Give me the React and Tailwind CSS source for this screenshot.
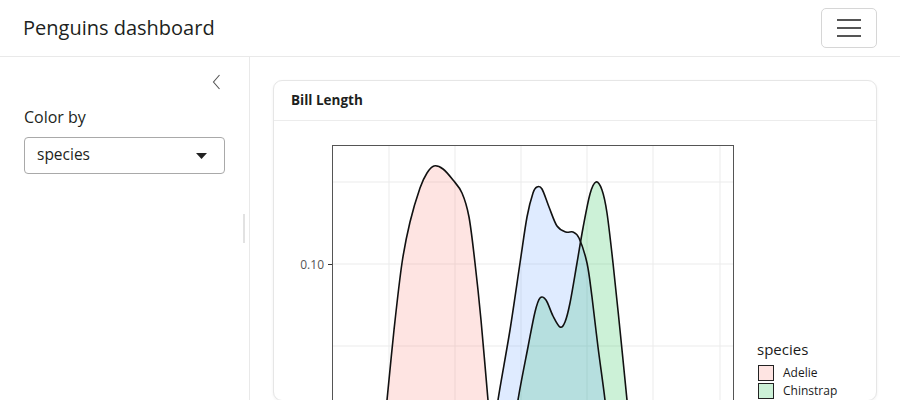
import React from "react";

function smoothPath(pts, closeY) {
  let d = `M${pts[0][0]},${closeY} L${pts[0][0]},${pts[0][1]}`;
  for (let i = 0; i < pts.length - 1; i++) {
    const p0 = pts[i - 1] || pts[i];
    const p1 = pts[i];
    const p2 = pts[i + 1];
    const p3 = pts[i + 2] || p2;
    const c1x = p1[0] + (p2[0] - p0[0]) / 6;
    const c1y = p1[1] + (p2[1] - p0[1]) / 6;
    const c2x = p2[0] - (p3[0] - p1[0]) / 6;
    const c2y = p2[1] - (p3[1] - p1[1]) / 6;
    d += ` C${c1x},${c1y} ${c2x},${c2y} ${p2[0]},${p2[1]}`;
  }
  d += ` L${pts[pts.length - 1][0]},${closeY} Z`;
  return d;
}

function linePath(pts) {
  let d = `M${pts[0][0]},${pts[0][1]}`;
  for (let i = 0; i < pts.length - 1; i++) {
    const p0 = pts[i - 1] || pts[i];
    const p1 = pts[i];
    const p2 = pts[i + 1];
    const p3 = pts[i + 2] || p2;
    const c1x = p1[0] + (p2[0] - p0[0]) / 6;
    const c1y = p1[1] + (p2[1] - p0[1]) / 6;
    const c2x = p2[0] - (p3[0] - p1[0]) / 6;
    const c2y = p2[1] - (p3[1] - p1[1]) / 6;
    d += ` C${c1x},${c1y} ${c2x},${c2y} ${p2[0]},${p2[1]}`;
  }
  return d;
}

const adelie = [
  [382, 440], [387, 400], [394, 330], [402, 263], [410, 222], [420, 188],
  [427, 173], [434, 166], [443, 169], [453, 180], [462, 193], [469, 217],
  [475, 263], [481, 320], [488, 400], [492, 440],
];
const gentoo = [
  [493, 440], [498, 400], [510, 330], [520, 263], [527, 217], [533, 193],
  [537, 187], [542, 189], [549, 207], [557, 226], [566, 232], [573, 232],
  [579, 238], [587, 263], [592, 297], [598, 347], [605, 400], [609, 440],
];
const chinstrap = [
  [513, 440], [518, 400], [528, 347], [535, 312], [540, 298], [546, 300],
  [553, 316], [560, 327], [565, 322], [570, 303], [577, 263], [583, 228],
  [590, 194], [596, 182], [602, 190], [607, 213], [613, 263], [620, 330],
  [627, 400], [631, 440],
];

function Plot() {
  const vGrid = [389, 455, 521, 587, 653, 720];
  const hGrid = [182, 264, 346];
  return (
    <svg
      width="601"
      height="279"
      viewBox="274 121 601 279"
      className="block"
      style={{ fontFamily: "'Open Sans', 'Noto Sans', sans-serif" }}
    >
      <defs>
        <clipPath id="panel">
          <rect x="333" y="146" width="400" height="300" />
        </clipPath>
      </defs>
      <g clipPath="url(#panel)">
        {vGrid.map((x) => (
          <line key={x} x1={x} y1="140" x2={x} y2="420" stroke="#ebebeb" strokeWidth="1" />
        ))}
        {hGrid.map((y) => (
          <line key={y} x1="330" y1={y} x2="740" y2={y} stroke="#ebebeb" strokeWidth="1" />
        ))}
        <path d={smoothPath(adelie, 440)} fill="#F8766D" fillOpacity="0.2" stroke="none" />
        <path d={linePath(adelie)} fill="none" stroke="#111" strokeWidth="1.6" />
        <path d={smoothPath(chinstrap, 440)} fill="#00BA38" fillOpacity="0.2" stroke="none" />
        <path d={smoothPath(gentoo, 440)} fill="#619CFF" fillOpacity="0.2" stroke="none" />
        <path d={linePath(chinstrap)} fill="none" stroke="#111" strokeWidth="1.6" />
        <path d={linePath(gentoo)} fill="none" stroke="#111" strokeWidth="1.6" />
      </g>
      <rect x="332.5" y="145.5" width="401" height="300" fill="none" stroke="#555" strokeWidth="1" />
      <line x1="328" y1="264.5" x2="332" y2="264.5" stroke="#333" strokeWidth="1" />
      <text x="324" y="268.5" textAnchor="end" fontSize="12" fill="#555">0.10</text>

      <text x="757" y="355" fontSize="15" fill="#1a1a1a">species</text>
      <rect x="758.5" y="365.5" width="15" height="15" fill="#FEE4E2" stroke="#222" strokeWidth="1" />
      <text x="783" y="377" fontSize="12" fill="#1a1a1a">Adelie</text>
      <rect x="758.5" y="383.5" width="15" height="15" fill="#CCF1D7" stroke="#222" strokeWidth="1" />
      <text x="783" y="395" fontSize="12" fill="#1a1a1a">Chinstrap</text>
    </svg>
  );
}

export default function App() {
  return (
    <div
      className="w-[900px] h-[400px] overflow-hidden bg-white text-[#1d1f21] flex flex-col"
      style={{ fontFamily: "'Open Sans', 'Noto Sans', sans-serif" }}
    >
      <header className="h-[57px] shrink-0 border-b border-[#e9e9e9] flex items-center justify-between pl-[23px] pr-[23px]">
        <h1 className="text-[20px] leading-none font-normal tracking-[0px]">Penguins dashboard</h1>
        <button className="w-[56px] h-[40px] border border-[#d6d6d6] rounded-[5px] flex flex-col items-center justify-center gap-[6px] mt-[-1px]">
          <span className="block w-[24px] h-[2px] bg-[#555]" />
          <span className="block w-[24px] h-[2px] bg-[#555]" />
          <span className="block w-[24px] h-[2px] bg-[#555]" />
        </button>
      </header>
      <div className="flex flex-1 min-h-0">
        <aside className="w-[250px] shrink-0 border-r border-[#e9e9e9] relative">
          <div className="flex justify-end pr-[28px] pt-[17px]">
            <svg width="9" height="16" viewBox="0 0 9 16">
              <polyline points="7.5,1 1.5,8 7.5,15" fill="none" stroke="#555" strokeWidth="1.1" />
            </svg>
          </div>
          <div className="px-[24px] pt-[15px]">
            <label className="block text-[16px] leading-[24px] mb-[8px]">Color by</label>
            <div className="w-[201px] h-[37px] border border-[#a9a9a9] rounded-[4px] flex items-center justify-between pl-[12px] pr-[17px]">
              <span className="text-[15.5px] leading-none pb-[1px]">species</span>
              <svg width="11" height="6" viewBox="0 0 11 6">
                <polygon points="0,0 11,0 5.5,6" fill="#222" />
              </svg>
            </div>
          </div>
          <div className="absolute left-[243px] top-[157px] w-[2px] h-[29px] bg-[#e2e2e2]" />
        </aside>
        <main className="flex-1 min-w-0 pl-[23px] pr-[23px] pt-[23px]">
          <div className="w-[604px] border border-[#e6e6e6] rounded-[9px] shadow-[0_1px_3px_rgba(0,0,0,0.06)] bg-white">
            <div className="h-[40px] border-b border-[#ececec] flex items-center pl-[17px] pt-[1px]">
              <span className="text-[13.5px] font-bold leading-none">Bill Length</span>
            </div>
            <Plot />
          </div>
        </main>
      </div>
    </div>
  );
}
